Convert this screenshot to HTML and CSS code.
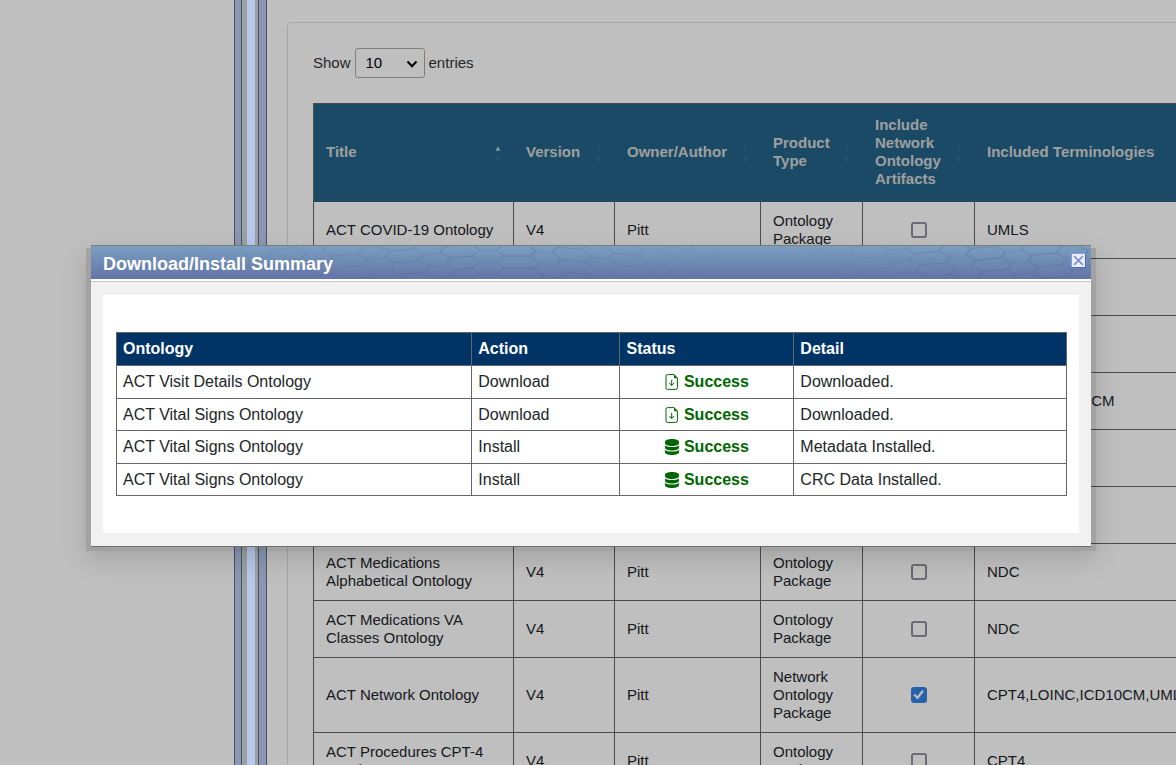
FILE: index.html
```html
<!DOCTYPE html>
<html lang="en">
<head>
<meta charset="utf-8">
<title>Ontology Downloads</title>
<link rel="stylesheet" href="styles.css">
</head>
<body>
<div class="app">
  <div class="side"></div>
  <div class="splitter"><span class="rail"></span><span class="track"><span class="grip"></span></span><span class="rail rail-wide"></span></div>
  <main class="main">
    <section class="card">
      <div class="length">
        <label for="entries">Show</label>
        <span class="select-box">
          <select id="entries"><option>10</option><option>25</option><option>50</option></select>
          <svg class="chevron" viewBox="0 0 12 8" aria-hidden="true"><path d="M1.500 1.500 6 6.200l4.500-4.700"/></svg>
        </span>
        <span>entries</span>
      </div>
      <table class="list">
        <colgroup><col class="c-title"><col class="c-version"><col class="c-owner"><col class="c-type"><col class="c-network"><col class="c-terms"></colgroup>
        <thead>
          <tr>
            <th class="asc">Title</th>
            <th class="sort">Version</th>
            <th class="sort">Owner/Author</th>
            <th class="sort">Product Type</th>
            <th class="sort">Include Network Ontology Artifacts</th>
            <th>Included Terminologies</th>
          </tr>
        </thead>
        <tbody>
          <tr><td>ACT COVID-19 Ontology</td><td>V4</td><td>Pitt</td><td>Ontology Package</td><td class="tick"><input type="checkbox" aria-label="Include network artifacts for ACT COVID-19 Ontology"></td><td>UMLS</td></tr>
          <tr><td></td><td></td><td></td><td></td><td></td><td></td></tr>
          <tr><td></td><td></td><td></td><td></td><td></td><td></td></tr>
          <tr><td></td><td></td><td></td><td></td><td></td><td>ICD9CM,ICD10CM</td></tr>
          <tr><td></td><td></td><td></td><td></td><td></td><td></td></tr>
          <tr><td></td><td></td><td></td><td></td><td></td><td></td></tr>
          <tr><td>ACT Medications Alphabetical Ontology</td><td>V4</td><td>Pitt</td><td>Ontology Package</td><td class="tick"><input type="checkbox" aria-label="Include network artifacts for ACT Medications Alphabetical Ontology"></td><td>NDC</td></tr>
          <tr><td>ACT Medications VA Classes Ontology</td><td>V4</td><td>Pitt</td><td>Ontology Package</td><td class="tick"><input type="checkbox" aria-label="Include network artifacts for ACT Medications VA Classes Ontology"></td><td>NDC</td></tr>
          <tr><td>ACT Network Ontology</td><td>V4</td><td>Pitt</td><td>Network Ontology Package</td><td class="tick"><input type="checkbox" checked aria-label="Include network artifacts for ACT Network Ontology"></td><td>CPT4,LOINC,ICD10CM,UMLS</td></tr>
          <tr><td>ACT Procedures CPT-4 Ontology</td><td>V4</td><td>Pitt</td><td>Ontology Package</td><td class="tick"><input type="checkbox" aria-label="Include network artifacts for ACT Procedures CPT-4 Ontology"></td><td>CPT4</td></tr>
        </tbody>
      </table>
    </section>
  </main>
</div>

<div class="mask"></div>

<svg class="sprite" aria-hidden="true">
  <symbol id="i-file" viewBox="0 0 14 16">
    <path d="M3 .6h6.200L12.400 4v9.800a1.600 1.600 0 0 1-1.600 1.600H2.600A1.600 1.600 0 0 1 1 13.800V2.200A1.600 1.600 0 0 1 2.600.6z" fill="none" stroke="currentColor" stroke-width="1"/>
    <path d="M9 .6 12.400 4.300H10A1 1 0 0 1 9 3.300z" fill="currentColor"/>
    <path d="M6.700 6.300v5M4.600 9.300l2.100 2.100 2.100-2.100" fill="none" stroke="currentColor" stroke-width="1" stroke-linecap="round" stroke-linejoin="round"/>
  </symbol>
  <symbol id="i-data" viewBox="0 0 14 16">
    <path d="M0 2.800C0 1.100 3 0 7 0s7 1.100 7 2.800v1.400C14 5.700 11 6.900 7 6.900S0 5.700 0 4.200z"/>
    <path d="M0 6.500c1.500 1.100 4.200 1.600 7 1.600s5.500-.5 7-1.600v2.300c0 1.500-3 2.700-7 2.700S0 10.300 0 8.800z"/>
    <path d="M0 11c1.500 1.100 4.200 1.600 7 1.600s5.500-.5 7-1.600v2.300c0 1.500-3 2.700-7 2.700s-7-1.200-7-2.700z"/>
  </symbol>
</svg>

<div class="dialog" role="dialog" aria-labelledby="dialog-title">
  <header class="bar">
    <svg class="comb" viewBox="0 0 1000 33" preserveAspectRatio="xMidYMid slice" aria-hidden="true">
      <defs>
        <pattern id="hexL" width="56" height="12" patternUnits="userSpaceOnUse" patternTransform="translate(381 4) rotate(-5) skewX(22)"><path d="M0 6 8 0H24L32 6H56M32 6 24 12M8 12 0 6"/></pattern>
        <pattern id="hexM" width="56" height="12" patternUnits="userSpaceOnUse" patternTransform="translate(381 4)"><path d="M0 6 8 0H24L32 6H56M32 6 24 12M8 12 0 6"/></pattern>
        <pattern id="hexR" width="56" height="12" patternUnits="userSpaceOnUse" patternTransform="translate(437 4) rotate(6) skewX(22)"><path d="M0 6 8 0H24L32 6H56M32 6 24 12M8 12 0 6"/></pattern>
        <linearGradient id="fadeIn"><stop offset="0" stop-color="#fff" stop-opacity="0"/><stop offset="1" stop-color="#fff"/></linearGradient>
        <linearGradient id="fadeOut"><stop offset="0" stop-color="#fff"/><stop offset="1" stop-color="#fff" stop-opacity="0"/></linearGradient>
        <mask id="mL"><rect x="60" width="321" height="33" fill="url(#fadeIn)"/></mask>
        <mask id="mR"><rect x="437" width="200" height="33" fill="url(#fadeOut)"/></mask>
        <mask id="mE"><rect x="710" width="160" height="33" fill="url(#fadeIn)"/><rect x="870" width="130" height="33" fill="#fff"/></mask>
      </defs>
      <rect x="60" width="321" height="33" fill="url(#hexL)" mask="url(#mL)"/>
      <rect x="381" width="56" height="33" fill="url(#hexM)"/>
      <rect x="437" width="200" height="33" fill="url(#hexR)" mask="url(#mR)"/>
      <rect x="710" width="290" height="33" fill="url(#hexL)" mask="url(#mE)"/>
    </svg>
    <h1 id="dialog-title">Download/Install Summary</h1>
    <button class="close" type="button" aria-label="Close"><svg viewBox="0 0 10 10" aria-hidden="true"><path d="M1 1l8 8M9 1 1 9"/></svg></button>
  </header>
  <div class="body">
    <div class="panel">
      <table class="summary">
        <colgroup><col class="s-ontology"><col class="s-action"><col class="s-status"><col class="s-detail"></colgroup>
        <thead><tr><th>Ontology</th><th>Action</th><th>Status</th><th>Detail</th></tr></thead>
        <tbody>
          <tr><td>ACT Visit Details Ontology</td><td>Download</td><td><span class="ok"><svg><use href="#i-file"/></svg>Success</span></td><td>Downloaded.</td></tr>
          <tr><td>ACT Vital Signs Ontology</td><td>Download</td><td><span class="ok"><svg><use href="#i-file"/></svg>Success</span></td><td>Downloaded.</td></tr>
          <tr><td>ACT Vital Signs Ontology</td><td>Install</td><td><span class="ok"><svg><use href="#i-data"/></svg>Success</span></td><td>Metadata Installed.</td></tr>
          <tr><td>ACT Vital Signs Ontology</td><td>Install</td><td><span class="ok"><svg><use href="#i-data"/></svg>Success</span></td><td>CRC Data Installed.</td></tr>
        </tbody>
      </table>
    </div>
  </div>
</div>
</body>
</html>
```
FILE: styles.css
```css
* { box-sizing: border-box; }

body {
  margin: 0;
  height: 100vh;
  overflow: hidden;
  background: #fff;
  color: #212529;
  font: 15px/18px "Liberation Sans", Arial, sans-serif;
}

.app { display: flex; height: 100vh; }
.side { flex: 0 0 234px; }

/* vertical divider between the two panes */
.splitter { display: flex; flex: 0 0 33px; }
.rail { flex: 0 0 8px; background: #b8c8ef; border: solid #5f7180; border-width: 0 1px; }
.rail-wide { flex-basis: 9px; }
.track { flex: 1; display: flex; justify-content: center; padding-left: 2px; background: #ced9d8; }
.grip { position: relative; z-index: 2; width: 8px; background: #b8c8ea; }

.main { flex: 1; min-width: 0; padding: 22px 0 0 20px; }
.card { width: 1100px; padding: 25px; border: 1px solid #dfdfdf; border-radius: 5px; }

.length { display: flex; align-items: center; gap: 4px; margin-bottom: 25px; color: #333; }
.select-box { position: relative; }
.length select {
  display: block;
  appearance: none;
  width: 70px;
  height: 30px;
  padding: 0 10px;
  border: 1px solid #aaa;
  border-radius: 3px;
  background: transparent;
  color: #000;
  font: inherit;
}
.chevron { position: absolute; right: 7px; top: 12px; width: 12px; height: 8px; fill: none; stroke: #000; stroke-width: 2; pointer-events: none; }

.list { width: 1040px; table-layout: fixed; border-collapse: separate; border-spacing: 0; border-left: 1px solid #666; }
.c-title { width: 200px; }
.c-version { width: 101px; }
.c-owner { width: 146px; }
.c-type { width: 102px; }
.c-network { width: 112px; }
.list th {
  position: relative;
  padding: 12px 30px 14px 12px;
  border-top: 1px solid #666;
  background: #246388;
  color: #d5d5d5;
  text-align: left;
  vertical-align: middle;
}
.list td { height: 57px; padding: 10px 12px; border: solid #666; border-width: 0 1px 1px 0; vertical-align: middle; }
.list .tick { text-align: center; }
.tick input {
  display: grid;
  place-items: center;
  appearance: none;
  width: 16px;
  height: 16px;
  margin: 0 auto;
  border: 2px solid #8f8f9d;
  border-radius: 3px;
}
.tick input:checked { border-color: #3584e4; background: #3584e4; }
.tick input:checked::before {
  content: "";
  width: 12px;
  height: 12px;
  background: #fff;
  clip-path: polygon(8% 52%, 22% 40%, 40% 60%, 80% 8%, 95% 20%, 42% 88%);
}

.sort::before, .sort::after, .asc::before, .asc::after {
  position: absolute;
  right: 14px;
  color: #34708c;
  font: 6px/6px "DejaVu Sans", sans-serif;
}
.sort::before, .asc::before { content: "\25B2"; top: calc(50% - 8px); }
.sort::after, .asc::after { content: "\25BC"; top: calc(50% + 3px); }
.asc::before { color: #b5cdd8; }

.mask { position: fixed; inset: 0; z-index: 1; background: rgba(0, 0, 0, .25); }
.sprite { display: none; }

.dialog {
  position: absolute;
  z-index: 3;
  top: 245px;
  left: 91px;
  right: 85px;
  border: solid #808080;
  border-width: 1px 0;
  background: #f1f1f1;
}
.dialog::before {
  content: "";
  position: absolute;
  z-index: -1;
  inset: 2px -5px -5px;
  background: rgba(0, 0, 0, .15);
  box-shadow: 0 8px 24px rgba(0, 0, 0, .15);
}
.bar {
  position: relative;
  display: flex;
  align-items: center;
  justify-content: space-between;
  height: 36px;
  padding: 0 5px 0 12px;
  border-bottom: 1px solid #c5c5c5;
  background: linear-gradient(#7a9fbf, #6474a8) 0 0 / 100% 33px no-repeat #fff;
}
.comb { position: absolute; left: 0; top: 0; width: 100%; height: 33px; }
.comb path { fill: none; stroke: #4d6494; stroke-opacity: .38; stroke-width: 1; }
.bar h1 { position: relative; margin: 0; color: #fff; font-size: 18px; line-height: 36px; }
.close {
  position: relative;
  display: grid;
  place-items: center;
  width: 15px;
  height: 15px;
  margin-bottom: 6px;
  padding: 0;
  border: 1px solid #5f70cc;
  border-color: #8c9ae0 #5164c0 #5164c0 #8c9ae0;
  background: #e9effb;
}
.close svg { width: 11px; height: 11px; fill: none; stroke: #8090d0; stroke-width: 1.5; }

.body { padding: 13px 12px; background: #f1f1f1; }
.panel { padding: 37px 12px 37px 13px; background: #fff; }
.summary {
  width: 100%;
  height: 164px;
  table-layout: fixed;
  border-collapse: separate;
  border-spacing: 0;
  border: solid #666;
  border-width: 1px 0 0 1px;
  font-size: 16px;
  line-height: 24px;
}
.s-ontology { width: 37.4%; }
.s-action { width: 15.6%; }
.s-status { width: 18.3%; }
.summary th, .summary td { padding: 4px 6px 3px; border: solid #666; border-width: 0 1px 1px 0; text-align: left; }
.summary th { padding-bottom: 4px; background: #036; color: #fff; }
.ok { display: flex; align-items: center; justify-content: center; gap: 5px; color: #060; font-weight: bold; }
.ok svg { width: 14px; height: 16px; fill: currentColor; }
```
